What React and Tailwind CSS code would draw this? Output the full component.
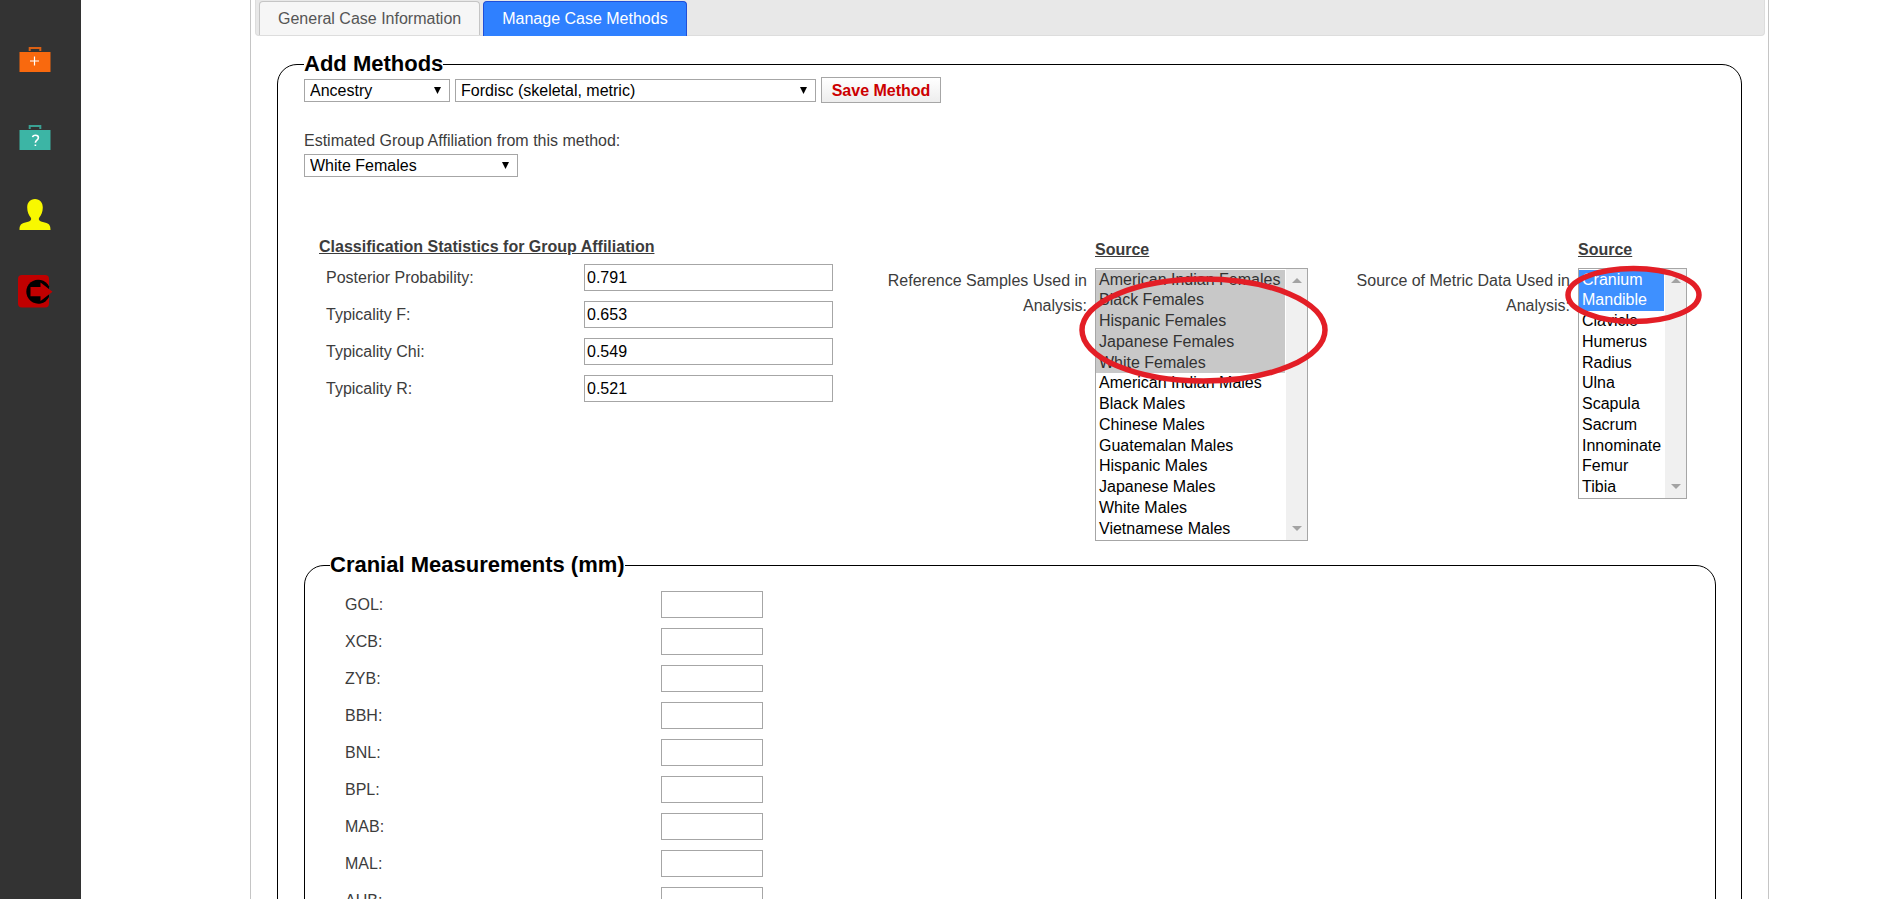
import React from "react";

const STATS = [
  ["posterior", "Posterior Probability:", "0.791"],
  ["typ-f", "Typicality F:", "0.653"],
  ["typ-chi", "Typicality Chi:", "0.549"],
  ["typ-r", "Typicality R:", "0.521"],
];

const SAMPLES = [
  "American Indian Females",
  "Black Females",
  "Hispanic Females",
  "Japanese Females",
  "White Females",
  "American Indian Males",
  "Black Males",
  "Chinese Males",
  "Guatemalan Males",
  "Hispanic Males",
  "Japanese Males",
  "White Males",
  "Vietnamese Males",
];

const BONES = [
  "Cranium",
  "Mandible",
  "Clavicle",
  "Humerus",
  "Radius",
  "Ulna",
  "Scapula",
  "Sacrum",
  "Innominate",
  "Femur",
  "Tibia",
];

const MEASUREMENTS = ["GOL", "XCB", "ZYB", "BBH", "BNL", "BPL", "MAB", "MAL", "AUB"];

function Briefcase({ color, children }) {
  return (
    <svg viewBox="0 0 32 26" className="h-[26px] w-8" aria-hidden="true">
      <path d="M10.7 5V2H21.3V5" fill="none" stroke={color} strokeWidth="2" opacity="0.85" />
      <rect x="0.5" y="6" width="31" height="20" fill={color} />
      {children}
    </svg>
  );
}

function Sidebar() {
  return (
    <nav aria-label="Main" className="w-[81px] shrink-0 bg-[#333333] pl-[19px] pt-[46px]">
      <ul className="flex flex-col">
        <li className="h-[78px]">
          <a href="#new" aria-label="New case" className="block w-8">
            <Briefcase color="#f9690e">
              <path d="M11 15H20M15.5 10.5V19.5" stroke="#fff" strokeWidth="1.2" />
            </Briefcase>
          </a>
        </li>
        <li className="h-[75px]">
          <a href="#find" aria-label="Find case" className="block w-8">
            <Briefcase color="#3cb5a5">
              <path
                d="M13.6 13.2C13.8 11.7 15 11.2 16.5 11.2C18.3 11.2 19.4 12.1 19.4 13.7C19.4 16.2 16.4 16 16.4 18.7M16.4 20.4V22"
                fill="none"
                stroke="#fff"
                strokeWidth="1.6"
              />
            </Briefcase>
          </a>
        </li>
        <li className="h-[76px]">
          <a href="#profile" aria-label="Profile" className="block w-8">
            <svg viewBox="0 0 32 32" className="h-8 w-8" aria-hidden="true">
              <path
                d="M16 0C21 0 23.8 3.6 23.8 8.5C23.8 13 22 16.5 20.3 18.5C19.2 20.2 20 21.7 22 22.5L27.5 24C30.5 25 31.5 27 31.5 31H0.5C0.5 27 1.5 25 4.5 24L10 22.5C12 21.7 12.8 20.2 11.7 18.5C10 16.5 8.2 13 8.2 8.5C8.2 3.6 11 0 16 0Z"
                fill="#f8f800"
              />
            </svg>
          </a>
        </li>
        <li>
          <a href="#logout" aria-label="Log out" className="-ml-px block w-9">
            <svg viewBox="0 0 36 33" className="h-[33px] w-9" aria-hidden="true">
              <rect width="31" height="32.5" rx="4" fill="#c00000" />
              <path d="M31 11.3A12 12 0 1 0 31 22.1Z" fill="#000" />
              <path d="M12.5 12H22.5V7.5L34.5 16.7L22.5 26V21.3H12.5Z" fill="#c00000" />
            </svg>
          </a>
        </li>
      </ul>
    </nav>
  );
}

function Dropdown({ label, id, value, className }) {
  return (
    <div className={"relative h-[23px] " + className}>
      <select
        id={id}
        aria-label={label}
        className="block h-full w-full appearance-none rounded-none border border-[#a6a6a6] bg-white pl-[5px] pr-6 pt-px text-base leading-5 text-black"
      >
        <option>{value}</option>
      </select>
      <svg
        viewBox="0 0 7 7"
        className="pointer-events-none absolute right-[9px] top-2 h-[7px] w-[7px]"
        aria-hidden="true"
      >
        <path d="M0 0H7L3.5 7Z" fill="#000" />
      </svg>
    </div>
  );
}

function ListBox({ id, options, selected, optionClass, className }) {
  return (
    <div className={"flex border border-[#a6a6a6] bg-white " + className}>
      <select
        id={id}
        multiple
        size={options.length}
        defaultValue={selected}
        className="h-full min-w-0 flex-1 overflow-hidden bg-white py-px pr-px text-base text-black outline-none"
      >
        {options.map((o) => (
          <option
            key={o}
            className={
              "h-[21px] min-h-0 px-[3px] pb-0 pt-px [&:nth-child(4n+1)]:h-[20px] " + optionClass
            }
          >
            {o}
          </option>
        ))}
      </select>
      <div className="flex w-[21px] flex-col items-center justify-between bg-[#f0f0f0] py-[9px]">
        <svg viewBox="0 0 10 5" className="h-[5px] w-[10px]" aria-hidden="true">
          <path d="M0 5L5 0L10 5Z" fill="#a3a3a3" />
        </svg>
        <svg viewBox="0 0 10 5" className="h-[5px] w-[10px]" aria-hidden="true">
          <path d="M0 0L5 5L10 0Z" fill="#a3a3a3" />
        </svg>
      </div>
    </div>
  );
}

function SourcePicker({ id, line, labelClass, children }) {
  return (
    <div className="flex shrink-0 pt-[3px]">
      <label
        htmlFor={id}
        className={"whitespace-nowrap pr-2 pt-[31px] text-right leading-[25px] " + labelClass}
      >
        {line}
        <br />
        Analysis:
      </label>
      <div>
        <h3 className="mb-[6px] font-bold leading-[25px] underline">Source</h3>
        <div className="relative">{children}</div>
      </div>
    </div>
  );
}

const FIELD = "h-[27px] border border-[#a6a6a6] bg-white px-[2px] text-base text-black";
const LEGEND = "text-[22px] font-bold leading-[26px] text-black";

export default function App() {
  return (
    <div className="flex h-screen overflow-hidden bg-white font-['Liberation_Sans',Arial,sans-serif] text-base text-[#3c3c3c]">
      <Sidebar />
      <main className="ml-[169px] mr-[125px] min-w-0 flex-1 border-x border-[#c5c5c5]">
        <div
          role="tablist"
          className="ml-1 mr-[3px] flex h-9 gap-[3px] rounded-b border border-t-0 border-[#dddddd] bg-[#e8e8e8] pl-[3px] pt-px"
        >
          <button
            role="tab"
            aria-selected="false"
            className="h-[34px] rounded-t border border-b-0 border-[#c5c5c5] bg-[#f6f6f6] px-[18px] text-[#555555]"
          >
            General Case Information
          </button>
          <button
            role="tab"
            aria-selected="true"
            className="h-[35px] rounded-t border border-b-0 border-[#1f4fd8] bg-[#2f80ff] px-[18px] text-white"
          >
            Manage Case Methods
          </button>
        </div>

        <fieldset className="mx-[26px] mt-[15px] rounded-[20px] border border-black pb-6 pl-[26px] pr-[25px]">
          <legend className={LEGEND}>Add Methods</legend>
          <div className="flex items-center gap-[5px]">
            <Dropdown label="Method type" id="type" value="Ancestry" className="w-[146px]" />
            <Dropdown label="Method" id="method" value="Fordisc (skeletal, metric)" className="w-[361px]" />
            <button className="h-[26px] w-[120px] border border-[#a6a6a6] bg-linear-to-b from-white to-[#ededed] pt-px font-bold text-[#cc0000]">
              Save Method
            </button>
          </div>

          <label htmlFor="group" className="mt-[25px] block leading-[25px]">
            Estimated Group Affiliation from this method:
          </label>
          <Dropdown id="group" value="White Females" className="mt-px w-[214px]" />

          <div className="mt-[57px] flex items-start gap-[46px] pl-[15px]">
            <section className="w-[520px] shrink-0">
              <h3 className="font-bold leading-[25px] underline">
                Classification Statistics for Group Affiliation
              </h3>
              <div className="mt-[5px] flex flex-col gap-[10px] pl-[7px]">
                {STATS.map(([id, label, value]) => (
                  <div key={id} className="flex items-center">
                    <label htmlFor={id} className="w-[258px]">
                      {label}
                    </label>
                    <input id={id} defaultValue={value} className={FIELD + " w-[249px]"} />
                  </div>
                ))}
              </div>
            </section>

            <SourcePicker id="samples" line="Reference Samples Used in" labelClass="w-[210px]">
              <ListBox
                id="samples"
                options={SAMPLES}
                selected={SAMPLES.slice(0, 5)}
                className="h-[273px] w-[213px]"
                optionClass="checked:bg-linear-to-r checked:from-[#c8c8c8] checked:to-[#c8c8c8] checked:[-webkit-text-fill-color:#323232]"
              />
              <svg
                viewBox="0 0 250 108"
                className="pointer-events-none absolute -left-4 top-2 h-[108px] w-[250px]"
                aria-hidden="true"
              >
                <ellipse cx="124.5" cy="54" rx="121.5" ry="51" fill="none" stroke="#e31e26" strokeWidth="5.5" />
              </svg>
            </SourcePicker>

            <SourcePicker id="bones" line="Source of Metric Data Used in" labelClass="w-[224px]">
              <ListBox
                id="bones"
                options={BONES}
                selected={BONES.slice(0, 2)}
                className="h-[231px] w-[109px]"
                optionClass="checked:bg-linear-to-r checked:from-[#3e90ff] checked:to-[#3e90ff] checked:[-webkit-text-fill-color:#ffffff]"
              />
              <svg
                viewBox="0 0 138 60"
                className="pointer-events-none absolute -left-[13px] -top-[3px] h-[60px] w-[138px]"
                aria-hidden="true"
              >
                <ellipse cx="68.5" cy="30" rx="65.5" ry="26.5" fill="none" stroke="#e31e26" strokeWidth="5.5" />
              </svg>
            </SourcePicker>
          </div>

          <fieldset className="mt-[11px] rounded-[20px] border border-black px-[25px] pb-6">
            <legend className={LEGEND}>Cranial Measurements (mm)</legend>
            <div className="flex flex-col gap-[10px] pl-[15px] pt-[13px]">
              {MEASUREMENTS.map((m) => (
                <div key={m} className="flex items-center">
                  <label htmlFor={m} className="w-[316px]">
                    {m}:
                  </label>
                  <input id={m} className={FIELD + " w-[102px]"} />
                </div>
              ))}
            </div>
          </fieldset>
        </fieldset>
      </main>
    </div>
  );
}
